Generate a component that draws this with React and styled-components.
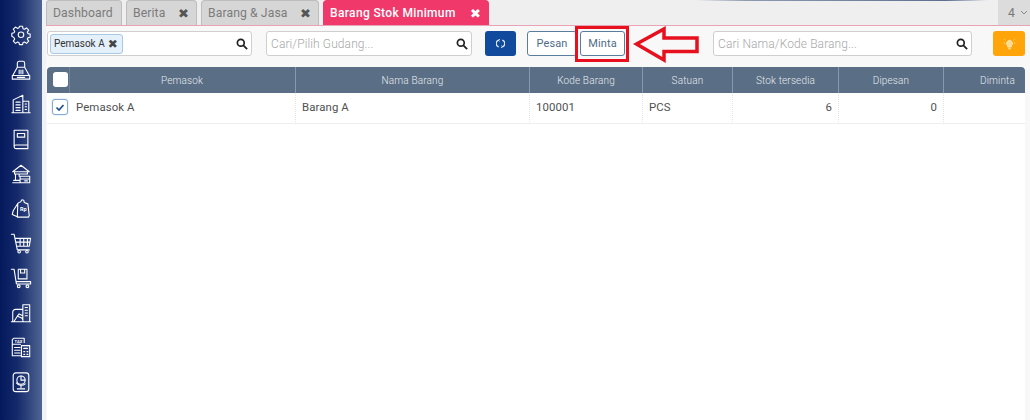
import React from "react";
import styled, { createGlobalStyle } from "styled-components";

const Global = createGlobalStyle`
  html, body { margin: 0; padding: 0; background: #fff; }
  body { font-family: "Roboto", "Open Sans", sans-serif; width: 1030px; height: 420px; overflow: hidden; }
  * { box-sizing: border-box; }
`;
const Page = styled.div`display: flex; width: 1030px; height: 420px; overflow: hidden; background: #f7f7f8;`;
const Sidebar = styled.nav`
  flex: 0 0 42px; height: 420px; padding-top: 24px;
  background: linear-gradient(90deg, #04195c 0%, #14296a 40%, #4f6592 100%);
  display: flex; flex-direction: column; align-items: center; gap: 12.7px;
`;
const NavIcon = styled.svg`width: 22px; height: 22px; flex: none; fill: none; stroke: #fff; stroke-width: 1.2; stroke-linejoin: round; stroke-linecap: round;`;
const IconLabel = styled.text`fill: #fff; stroke: none; font-family: "Roboto", sans-serif; font-weight: 700; font-size: ${p => p.$s}px;`;
const Gutter = styled.div`flex: 0 0 4px; background: #f1f1f6;`;
const Main = styled.main`flex: 1; min-width: 0; display: flex; flex-direction: column;`;
const TabBar = styled.div`
  height: 26px; border-bottom: 1px solid #e8a4b4; display: flex; align-items: flex-end; gap: 4px; position: relative;
  background-color: #efefef;
  background-image: linear-gradient(90deg, transparent 651px, #8e9ab0 700px, #5d6f90 900px, transparent 941px);
  background-size: 100% 1px; background-repeat: no-repeat;
`;
const Tab = styled.div`
  height: 25px; width: ${p => p.$w}px; padding: 0 7px 0 6px; border: 1px solid ${p => p.$active ? "#f0386b" : "#bdbdbd"}; border-bottom: none;
  border-radius: 4px 4px 0 0; background: ${p => p.$active ? "#f0386b" : "#d6d6d6"}; color: ${p => p.$active ? "#fff" : "#7c7c7c"};
  font-size: ${p => p.$active ? 12 : 12.2}px; font-weight: ${p => p.$active ? 500 : 400}; letter-spacing: ${p => p.$active ? .35 : .1}px;
  display: flex; align-items: center; justify-content: space-between; white-space: nowrap;
`;
const TabClose = styled.span`font-family: "DejaVu Sans", sans-serif; font-size: 13px; font-weight: 700; letter-spacing: 0; color: ${p => p.$active ? "#fff" : "#555"};`;
const TabCount = styled.div`
  position: absolute; right: 0; top: 0; width: 32px; height: 25px; background: #dcdcdc; color: #777; font-size: 12.2px; display: flex; align-items: center; gap: 5px; padding-left: 10px;
`;
const Toolbar = styled.div`height: 41px; display: flex; align-items: flex-start; padding: 5px 0 0 1px; background: #f8f8f8; position: relative;`;
const Field = styled.div`
  width: ${p => p.$w}px; margin-left: ${p => p.$ml || 0}px; height: 25px; background: #fff; border: 1px solid #cfcfcf; border-radius: 3px;
  display: flex; align-items: center; padding: 0 3px 0 3px; justify-content: space-between;
`;
const Placeholder = styled.span`font-size: 12px; color: #a8a8a8; letter-spacing: .1px; white-space: nowrap; font-weight: 300; margin-left: 1px;`;
const Chip = styled.span`
  height: 20px; padding: 0 4px 0 3px; margin-left: -1px; border: 1px solid #a9c8e3; border-radius: 3px; background: #e4f0fa; color: #333; font-size: 10px;
  display: inline-flex; align-items: center; gap: 3px; white-space: nowrap;
`;
const ChipX = styled.span`font-family: "DejaVu Sans", sans-serif; font-size: 12px; font-weight: 700; color: #444;`;
const SearchIcon = styled.svg`width: 12px; height: 12px; flex: none; fill: none; stroke: #222; stroke-width: 2;`;
const RefreshBtn = styled.button`
  width: 31px; height: 25px; margin-left: 13px; border: none; border-radius: 3px; background: #114a9c; padding: 0; display: flex; align-items: center; justify-content: center;
`;
const OutlineBtn = styled.button`
  width: ${p => p.$w}px; height: 25px; margin-left: ${p => p.$ml}px; border: 1px solid #5b7d9c; border-radius: 3px; background: #fff; color: #4e6c86;
  font-family: inherit; font-size: 11px; padding: 0; letter-spacing: .1px;
`;
const BulbBtn = styled.button`
  width: 32px; height: 25px; margin-left: 21px; border: none; border-radius: 3px; background: #ffa50a; padding: 0; display: flex; align-items: center; justify-content: center;
`;
const TableArea = styled.div`flex: 1; padding: 0 5px 0 1px; background: #f8f8f8;`;
const Table = styled.div`background: #fff; height: 353px;`;
const Grid = styled.div`display: grid; grid-template-columns: 248px 234px 113px 90px 106px 105px 82px;`;
const HeaderCell = styled.div`
  height: 26px; background: #5a6e85; color: #e6eaee; font-size: 10px; letter-spacing: .15px; font-weight: 300; display: flex; align-items: center;
  justify-content: ${p => p.$end ? "flex-end" : "center"}; padding: 0 ${p => p.$end ? 10 : 0}px 0 ${p => p.$first ? 22 : 0}px;
  border-left: ${p => p.$first ? "none" : "1px solid #8899aa"}; position: relative;
  border-top-left-radius: ${p => p.$first ? 4 : 0}px; border-top-right-radius: ${p => p.$end ? 4 : 0}px;
`;
const HeaderCheck = styled.span`position: absolute; left: 6px; top: 5px; width: 15px; height: 15px; background: #fff; border-radius: 3px;`;
const HeaderSep = styled.span`position: absolute; left: 22px; top: 0; bottom: 0; width: 1px; background: #71839a;`;
const Cell = styled.div`
  height: 31px; border-bottom: 1px solid #eee; border-left: ${p => p.$first ? "none" : "1px dotted #e4e4e4"}; color: #505050; font-size: 11.4px; letter-spacing: .1px; display: flex; align-items: center;
  justify-content: ${p => p.$num ? "flex-end" : "flex-start"}; padding: 0 6px 2px ${p => p.$first ? 5 : 6}px; gap: 8px; white-space: nowrap;
`;
const RowCheck = styled.span`
  width: 16px; height: 16px; border: 1.5px solid #86abcf; border-radius: 3px; background: #fff; box-shadow: 0 0 2px #b8d0e6; display: flex; align-items: center; justify-content: center; flex: none;
`;
const RedBox = styled.div`position: absolute; left: 529px; top: 0; width: 54px; height: 36px; border: 3.5px solid #e6101e; pointer-events: none;`;
const Arrow = styled.svg`position: absolute; left: 586px; top: 0; width: 70px; height: 37px; pointer-events: none; overflow: visible;`;

const Search = () => (
  <SearchIcon viewBox="0 0 14 14"><circle cx="5.6" cy="5.6" r="4" /><path d="M8.6 8.6 13 13" /></SearchIcon>
);

const icons = [
  <g key="gear"><path d="M10.3 2.5h3.4l.5 2.6 1.6.7 2.2-1.5 2.4 2.4-1.5 2.2.7 1.6 2.4.5v3.4l-2.4.5-.7 1.6 1.5 2.2-2.4 2.4-2.2-1.5-1.6.7-.5 2.2h-3.4l-.5-2.2-1.6-.7-2.2 1.5-2.4-2.4 1.5-2.2-.7-1.6L2 13.4V10l2.4-.5.7-1.6-1.5-2.2L6 3.3l2.2 1.5 1.6-.7z" /><circle cx="12" cy="11.7" r="3" /></g>,
  <g key="scan"><path d="M8 9V4.500A2 2 0 0 1 10 2.500h4a2 2 0 0 1 2 2V9zM8 9l-5 9h18l-5-9M2.500 18h19v4h-19zM8 20h8M10 12v4M12 12v4M14 12v4" /></g>,
  <g key="city"><path d="M3.500 21.500V7.500L14 2.500v19M14 9h6.500v12.500M2 21.500h20M6.500 10h4.500M6.500 13h4.500M6.500 16h4.500M6.500 19h4.500M16.500 12h1.500M16.500 15h1.500M16.500 18h1.500" /></g>,
  <g key="book"><path d="M4.500 2.500h15v16H6.500a2 2 0 0 0-2 2zM4.500 20.500a2 2 0 0 0 2 2h13v-4M8 6h8v4H8z" /></g>,
  <g key="bank"><path d="M3 9.500 12 2.500l9 7zM5 9.500v2.500h14V9.500M6 12v7M10 12v2.500M3 21.500h7.500M4 19h6.500M11 14.500h10.500v7H11zM11 17.500h10.500M16 19.500h3" /></g>,
  <g key="bag"><path d="M8.500 7 3.500 15l-1 4 5.500 2.500zM8.500 7c1-1 2.500-1.500 3-1.500L13 3l2 .5L15.500 6l4 1.500 1.500 13-1 1.500H8z" /><IconLabel x="11" y="15.500" $s={6}>Rp</IconLabel></g>,
  <g key="cart"><path d="M1.500 2.500h3l3.500 17h13M6 7h16.500l-1.500 8.500H7.500M11 7v8.500M15 7v8.500M19 7v8.500M6.800 11h15" /><circle cx="10" cy="21.500" r="1.400" /><circle cx="18.500" cy="21.500" r="1.400" /></g>,
  <g key="cartbox"><path d="M1.500 2.500h3l2.500 16h15.500v-2.500H7M9 2.500h9.500V13H9zM11.500 2.500v4h4.500v-4" /><circle cx="9.500" cy="21" r="1.500" /><circle cx="19" cy="21" r="1.500" /></g>,
  <g key="factory"><path d="M3 21V11a3 3 0 0 1 3-3h7.500M14 21V3h7.500v18M1.500 21.500h21M16.500 6h2.500M16.500 9h2.500M16.500 12h2.500M16.500 15h2.500M4.500 21 8 15.500l5 2 1.500 3.500M8 15.500l2-2.500 4 2" /></g>,
  <g key="tax"><path d="M15.500 7V2.500H4L2.500 4v17.500h9.500M2.500 9h9M5 12.500h6M5 15.500h6M5 18.500h6M12.500 10.500h9v12h-9zM15 13.500h4M15 17h1M18.500 17h1M15 20h1M18.500 20h1" /><IconLabel x="5" y="7.500" $s={4.500}>TAX</IconLabel></g>,
  <g key="globe"><rect x="3.500" y="2" width="17" height="20.500" rx="3" /><circle cx="12" cy="10" r="4.500" /><path d="M12 10V5.500M12 10h4.500M7 13c2 3 7 3.500 9.500 1M12 16v2M8 19.500h8" /></g>,
];

const headers = ["Pemasok", "Nama Barang", "Kode Barang", "Satuan", "Stok tersedia", "Dipesan", "Diminta"];

export default function App() {
  return (
    <>
      <Global />
      <Page>
        <Sidebar>
          {icons.map((ic, i) => <NavIcon key={i} viewBox="0 0 24 24">{ic}</NavIcon>)}
        </Sidebar>
        <Gutter />
        <Main>
          <TabBar>
            <Tab $w={76}>Dashboard</Tab>
            <Tab $w={71}>Berita<TabClose>✖</TabClose></Tab>
            <Tab $w={118}>Barang &amp; Jasa<TabClose>✖</TabClose></Tab>
            <Tab $w={166} $active>Barang Stok Minimum<TabClose $active>✖</TabClose></Tab>
            <TabCount>4<svg width="8" height="5" viewBox="0 0 8 5" fill="none" stroke="#888" strokeWidth="1"><path d="M1 1l3 3 3-3" /></svg></TabCount>
          </TabBar>
          <Toolbar>
            <Field $w={205}>
              <Chip>Pemasok A <ChipX>✖</ChipX></Chip>
              <Search />
            </Field>
            <Field $w={206} $ml={14}>
              <Placeholder>Cari/Pilih Gudang...</Placeholder>
              <Search />
            </Field>
            <RefreshBtn aria-label="refresh">
              <svg width="9" height="9" viewBox="0 0 10 10" fill="none" stroke="#dfe8f5" strokeWidth="1.4"><path d="M3 1.200A4 4 0 0 0 3 8.800M7 1.200A4 4 0 0 1 7 8.800" /><path d="M4.500 .2 2.600 1.400l1.500 1.200M5.500 9.800l1.900-1.200-1.500-1.200" strokeWidth="1" /></svg>
            </RefreshBtn>
            <OutlineBtn $w={50} $ml={11}>Pesan</OutlineBtn>
            <OutlineBtn $w={45} $ml={3}>Minta</OutlineBtn>
            <Field $w={259} $ml={88}>
              <Placeholder>Cari Nama/Kode Barang...</Placeholder>
              <Search />
            </Field>
            <BulbBtn aria-label="hint">
              <svg width="13" height="14" viewBox="0 0 15 15" fill="#ffd98a" stroke="#ffeec0" strokeWidth="1.1"><path d="M5.500 11V9.400A3.300 3.300 0 1 1 9.500 9.400V11zM6 13h3M2.500 3l-.8-.7M12.500 3l.8-.7M2 6.500H1M13 6.500h1" /></svg>
            </BulbBtn>
            <RedBox />
            <Arrow viewBox="0 0 70 37">
              <path d="M4.500 18 32 3v9h33v13.500H32V34z" fill="none" stroke="#e6101e" strokeWidth="3.500" strokeLinejoin="miter" />
            </Arrow>
          </Toolbar>
          <TableArea>
            <Table>
              <Grid>
                {headers.map((t, i) => (
                  <HeaderCell key={t} $first={i === 0} $end={i === 6}>
                    {i === 0 && <HeaderCheck />}
                    {i === 0 && <HeaderSep />}
                    {t}
                  </HeaderCell>
                ))}
                <Cell $first>
                  <RowCheck>
                    <svg width="10" height="9" viewBox="0 0 10 9" fill="none" stroke="#1d4f8c" strokeWidth="1.7"><path d="M1.500 4.500 4 7l4.500-5" /></svg>
                  </RowCheck>
                  Pemasok A
                </Cell>
                <Cell>Barang A</Cell>
                <Cell>100001</Cell>
                <Cell>PCS</Cell>
                <Cell $num>6</Cell>
                <Cell $num>0</Cell>
                <Cell $num />
              </Grid>
            </Table>
          </TableArea>
        </Main>
      </Page>
    </>
  );
}
